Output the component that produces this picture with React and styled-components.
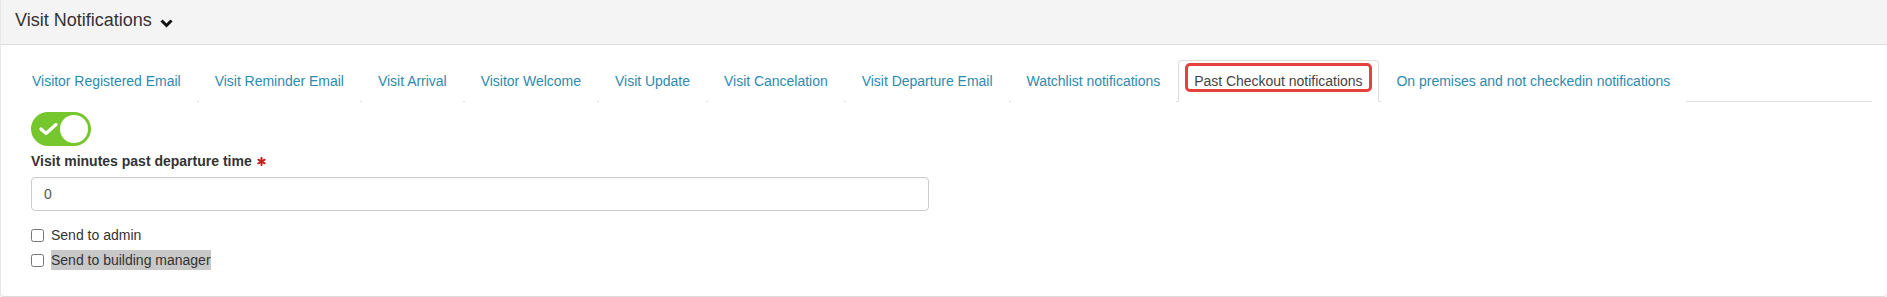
import React from "react";
import styled, { createGlobalStyle } from "styled-components";

const GlobalStyle = createGlobalStyle`
  html, body { margin: 0; padding: 0; background: #fff; }
  body {
    font-family: "Liberation Sans", Arial, sans-serif;
    font-size: 14px;
    line-height: 1.42857;
    color: #333;
  }
  * { box-sizing: border-box; }
`;

const Panel = styled.section`
  width: 100%;
  height: 297px;
  background: #fff;
  border-bottom: 1px solid #ddd;
  border-left: 1px solid #e8e8e8;
  border-radius: 0 0 4px 4px;
  box-shadow: 0 1px 1px rgba(0, 0, 0, 0.06);
  overflow: hidden;
`;

const Heading = styled.header`
  display: flex;
  align-items: center;
  gap: 8px;
  height: 45px;
  padding: 0 15px 2px 14px;
  background: #f4f4f4;
  border-bottom: 1px solid #ddd;
  font-size: 18px;
  color: #333;
`;

const Chevron = styled.svg`
  width: 13px;
  height: 9px;
  margin-top: 4px;
`;

const Body = styled.div`
  padding: 15px 15px 0;
`;

const Tabs = styled.ul`
  display: flex;
  list-style: none;
  margin: 0;
  padding: 0;
  border-bottom: 1px solid #ddd;
`;

const Tab = styled.li`
  position: relative;
  margin: 0 2px -1px 0;
  padding: 10px 15px;
  line-height: 20px;
  font-size: 14px;
  letter-spacing: -0.02px;
  white-space: nowrap;
  border: 1px solid ${(p) => (p.$active ? "#ddd" : "transparent")};
  border-bottom-color: ${(p) => (p.$active ? "#fff" : "transparent")};
  border-radius: 4px 4px 0 0;
  background: #fff;
  color: ${(p) => (p.$active ? "#444" : "#2e8ab0")};
  cursor: pointer;
`;

const Highlight = styled.span`
  position: absolute;
  left: 6px;
  top: 2px;
  right: 6px;
  height: 29px;
  border: 3px solid #e5423f;
  border-radius: 5px;
  pointer-events: none;
`;

const Content = styled.div`
  padding: 10px 15px 0;
`;

const Toggle = styled.button`
  position: relative;
  display: flex;
  align-items: center;
  width: 60px;
  height: 34px;
  padding: 0 0 0 8px;
  border: none;
  border-radius: 17px;
  background: #76c62e;
  cursor: pointer;
`;

const Knob = styled.span`
  position: absolute;
  right: 3px;
  top: 3px;
  width: 28px;
  height: 28px;
  border-radius: 50%;
  background: #fff;
`;

const Label = styled.label`
  display: flex;
  align-items: center;
  gap: 5px;
  margin: 5px 0 6px;
  font-weight: bold;
  line-height: 20px;
  color: #333;
`;

const Input = styled.input`
  display: block;
  width: 898px;
  height: 34px;
  padding: 6px 12px;
  border: 1px solid #ccc;
  border-radius: 4px;
  font-family: inherit;
  font-size: 14px;
  color: #555;
  box-shadow: inset 0 1px 1px rgba(0, 0, 0, 0.03);
`;

const CheckList = styled.div`
  display: flex;
  flex-direction: column;
  gap: 5px;
  margin-top: 14px;
`;

const CheckRow = styled.label`
  display: flex;
  align-items: flex-start;
  gap: 7px;
  line-height: 20px;
  color: #333;
`;

const Box = styled.input`
  width: 13px;
  height: 13px;
  margin: 4px 0 0;
`;

const RowText = styled.span`
  background: ${(p) => (p.$selected ? "#c8c8c8" : "transparent")};
`;

const tabs = [
  "Visitor Registered Email",
  "Visit Reminder Email",
  "Visit Arrival",
  "Visitor Welcome",
  "Visit Update",
  "Visit Cancelation",
  "Visit Departure Email",
  "Watchlist notifications",
  "Past Checkout notifications",
  "On premises and not checkedin notifications",
];

export default function App() {
  return (
    <>
      <GlobalStyle />
      <Panel>
        <Heading>
          Visit Notifications
          <Chevron viewBox="0 0 13 9">
            <polyline points="1.5,1.5 6.5,6.5 11.5,1.5" fill="none" stroke="#111" strokeWidth="3" />
          </Chevron>
        </Heading>
        <Body>
          <Tabs>
            {tabs.map((t) => {
              const active = t === "Past Checkout notifications";
              return (
                <Tab key={t} $active={active}>
                  {t}
                  {active && <Highlight />}
                </Tab>
              );
            })}
          </Tabs>
          <Content>
            <Toggle type="button" aria-pressed="true">
              <svg width="19" height="12" viewBox="0 0 19 12">
                <polyline points="2,6 7,10.5 17,1.5" fill="none" stroke="#fff" strokeWidth="3.2" strokeLinecap="round" strokeLinejoin="round" />
              </svg>
              <Knob />
            </Toggle>
            <Label>
              Visit minutes past departure time
              <svg width="9" height="9" viewBox="0 0 10 10">
                <g stroke="#c0201c" strokeWidth="2.2" strokeLinecap="round">
                  <line x1="5" y1="1" x2="5" y2="9" />
                  <line x1="1.5" y1="3" x2="8.5" y2="7" />
                  <line x1="1.5" y1="7" x2="8.5" y2="3" />
                </g>
              </svg>
            </Label>
            <Input defaultValue="0" />
            <CheckList>
              <CheckRow>
                <Box type="checkbox" />
                <RowText>Send to admin</RowText>
              </CheckRow>
              <CheckRow>
                <Box type="checkbox" />
                <RowText $selected>Send to building manager</RowText>
              </CheckRow>
            </CheckList>
          </Content>
        </Body>
      </Panel>
    </>
  );
}
